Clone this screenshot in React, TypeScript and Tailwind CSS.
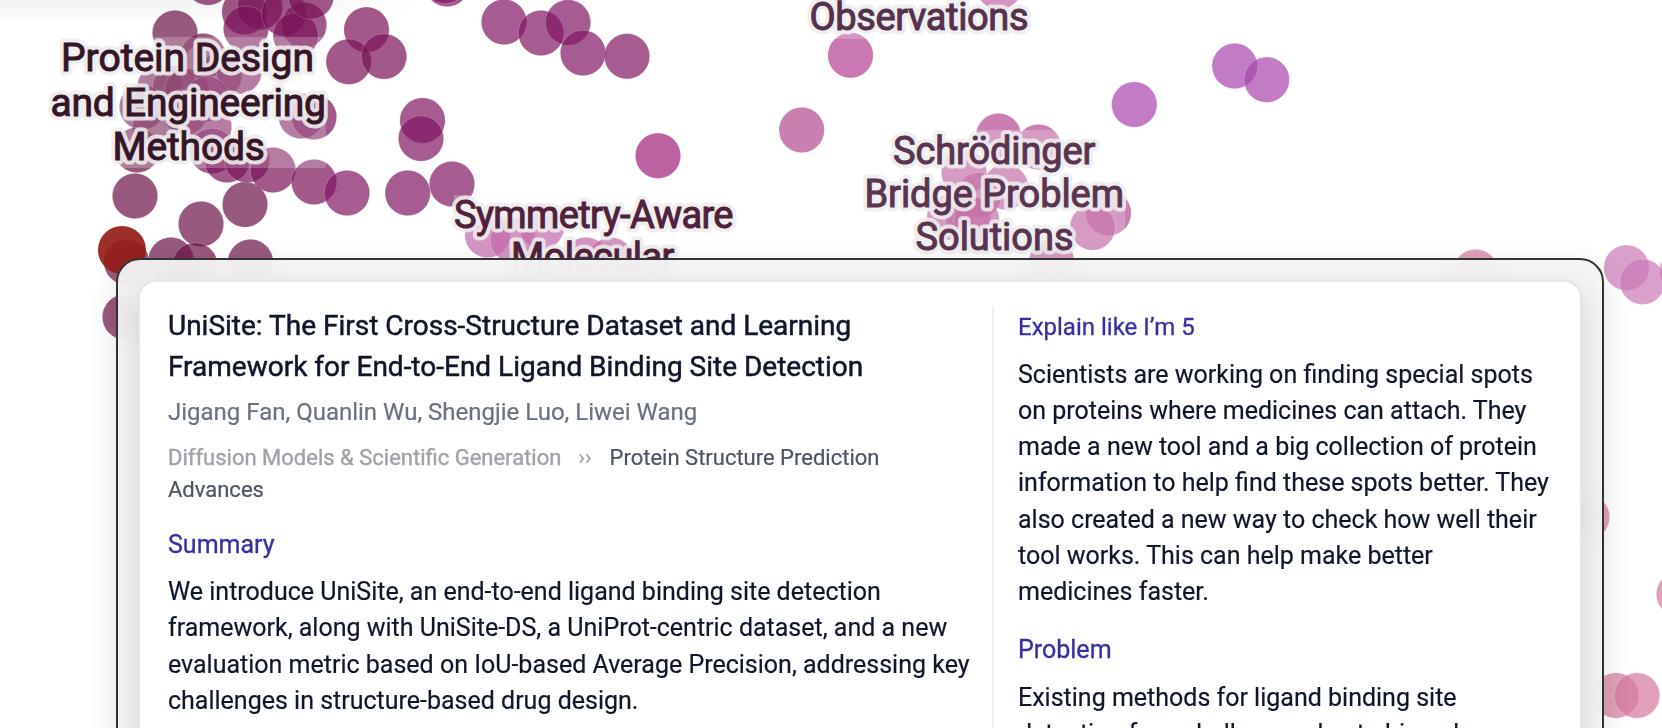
import React from 'react';

interface DotGroup {
  color: string;
  points: [number, number][];
}

interface LabelLine {
  text: string;
  x: number;
  y: number;
  width: number;
}

interface MapLabel {
  color: string;
  size: number;
  box: [number, number, number, number];
  lines: LabelLine[];
}

const DOT_RADIUS = 22.7;

const dotGroups: DotGroup[] = [
  {
    color: '#6c1347',
    points: [
      [175, 33], [203, 56], [219, 76], [135, 196], [245, 204.5], [201, 224],
      [171, 260], [195, 265.5], [250.5, 262], [126.5, 262], [125, 317],
      [160, 87], [175, 88], [187, 91], [142, 107], [155, 128], [185, 112], [137, 150],
    ],
  },
  {
    color: '#7a1359',
    points: [
      [208, -17.5], [244.5, 12], [260, 7], [246, 28.7], [284, 13.5], [304, 25],
      [295.7, 35.4], [311, -3.5], [366.5, 29.7], [348.7, 61.7], [384, 56.5],
      [239, 71.5], [207, 99], [209, 127], [212, 151], [227, 160], [247, 160],
      [273, 170], [314, 182], [301, 116], [314, 117],
    ],
  },
  {
    color: '#801662',
    points: [
      [347, 193], [407.7, 193], [452, 184], [422.5, 120.5], [421, 138.5],
      [504, 22], [541, 33], [568, 22.5], [583, 53], [627, 56.3], [447, -16], [445, -19],
    ],
  },
  { color: '#a11f77', points: [[658, 155.7]] },
  {
    color: '#b23e91',
    points: [[850.5, 55.3], [999, -13], [487.5, 235], [513, 240], [541.7, 226.5], [586, 260], [610.7, 260]],
  },
  {
    color: '#b44890',
    points: [
      [801.7, 130], [998.5, 136], [1038.5, 147], [964, 172.5], [1005.5, 187],
      [979, 195], [949.5, 217.5], [968, 218], [976.7, 220], [1108.5, 213],
      [1092.5, 227.5], [1051.7, 262],
    ],
  },
  { color: '#a644ac', points: [[1134.3, 104.5], [1234.7, 66], [1266.7, 79.7]] },
  { color: '#c977b5', points: [[1626.5, 267.7], [1642.5, 281.7], [1682, 272]] },
  { color: '#d3779c', points: [[1475.7, 272], [1587, 517], [1679, 594], [1616, 695.5], [1637, 695.5]] },
];

const mapLabels: MapLabel[] = [
  {
    color: '#361527',
    size: 39,
    box: [49, 37, 277, 131],
    lines: [
      { text: 'Protein Design', x: 61, y: 71.3, width: 253 },
      { text: 'and Engineering', x: 50.5, y: 115.5, width: 275.5 },
      { text: 'Methods', x: 112.5, y: 159.5, width: 152.5 },
    ],
  },
  {
    color: '#56304c',
    size: 38,
    box: [808, -40, 222, 79],
    lines: [{ text: 'Observations', x: 809.5, y: 30.3, width: 219 }],
  },
  {
    color: '#5a3450',
    size: 38,
    box: [864, 130, 261, 131],
    lines: [
      { text: 'Schrödinger', x: 893, y: 164, width: 202.5 },
      { text: 'Bridge Problem', x: 864.5, y: 207, width: 259.5 },
      { text: 'Solutions', x: 915.5, y: 250.3, width: 158 },
    ],
  },
  {
    color: '#4f213b',
    size: 38,
    box: [454, 195, 280, 90],
    lines: [
      { text: 'Symmetry-Aware', x: 454, y: 228, width: 279.5 },
      { text: 'Molecular', x: 511, y: 270, width: 163.5 },
    ],
  },
];

const PaperMap: React.FC = () => (
  <svg className="absolute inset-0" width="1662" height="728" viewBox="0 0 1662 728">
    {dotGroups.map((group) =>
      group.points.map(([x, y]) => (
        <circle
          key={`${x}-${y}`}
          cx={x}
          cy={y}
          r={DOT_RADIUS}
          fill={group.color}
          fillOpacity={0.7}
          stroke="#ffffff"
          strokeOpacity={0.2}
          strokeWidth={1}
        />
      ))
    )}
    {/* Currently selected paper */}
    <circle cx={122} cy={250} r={24} fill="#951d18" fillOpacity={0.92} />

    {mapLabels.map((label) => (
      <g key={label.lines[0].text} fontFamily="Roboto, sans-serif" fontSize={label.size}>
        <rect
          x={label.box[0]}
          y={label.box[1]}
          width={label.box[2]}
          height={label.box[3]}
          fill="#ffffff"
          fillOpacity={0.22}
        />
        {label.lines.map((line) => (
          <text
            key={line.text}
            x={line.x}
            y={line.y}
            textLength={line.width}
            fill="none"
            stroke="#eeedee"
            strokeOpacity={0.88}
            strokeWidth={9}
            strokeLinejoin="round"
          >
            {line.text}
          </text>
        ))}
        {label.lines.map((line) => (
          <text
            key={line.text}
            x={line.x}
            y={line.y}
            textLength={line.width}
            fill={label.color}
            stroke={label.color}
            strokeWidth={1}
          >
            {line.text}
          </text>
        ))}
      </g>
    ))}
  </svg>
);

const SectionTitle: React.FC<{ className?: string; children: React.ReactNode }> = ({
  className = 'text-[25px]',
  children,
}) => (
  <h3 className={`${className} leading-9 text-[#3730a3] [-webkit-text-stroke:0.3px_#3730a3]`}>{children}</h3>
);

const SectionBody: React.FC<{ lines: string[] }> = ({ lines }) => (
  <p className="mt-3 text-[25px] leading-[36.3px] whitespace-nowrap text-[#0f172a] [-webkit-text-stroke:0.2px_#0f172a]">
    {lines.map((line) => (
      <span key={line} className="block">{line}</span>
    ))}
  </p>
);

const App: React.FC = () => {
  return (
    <div className="relative h-[728px] w-[1662px] overflow-hidden bg-white font-[Roboto,sans-serif]">
      <PaperMap />
      <div className="absolute top-0 left-0 h-6 w-[420px] bg-linear-to-b from-black/5 to-transparent mask-r-from-60% mask-r-to-100%" />

      {/* Paper details popup */}
      <div className="absolute top-[258px] left-[116px] h-[900px] w-[1488px] rounded-[24px] border-2 border-[#333333] bg-[#f3f3f3]/94 p-5 shadow-[0_8px_28px_rgba(0,0,0,0.12)] backdrop-blur-lg">
        <div className="flex h-full rounded-[18px] border-2 border-[#e5e5ec] bg-white px-7 pt-6 shadow-[0_10px_28px_rgba(0,0,0,0.14)]">
          <div className="w-[826px] border-r-2 border-[#ededf3]">
            <h2 className="-mt-px text-[28px] leading-[41px] whitespace-nowrap text-[#0f172a] [-webkit-text-stroke:0.5px_#0f172a]">
              UniSite: The First Cross-Structure Dataset and Learning
              <br />
              Framework for End-to-End Ligand Binding Site Detection
            </h2>
            <p className="mt-[7px] text-[24px] leading-9 text-[#6b7280] [-webkit-text-stroke:0.2px_#6b7280]">
              Jigang Fan, Quanlin Wu, Shengjie Luo, Liwei Wang
            </p>
            <p className="mt-3 text-[22px] leading-8 whitespace-nowrap text-[#4b5563] [-webkit-text-stroke:0.2px_#4b5563]">
              <span className="text-[#a1a1aa] [-webkit-text-stroke:0.4px_#a1a1aa]">
                Diffusion Models &amp; Scientific Generation
              </span>
              <span className="mr-[18px] ml-[17px] text-[#9ca3af] [-webkit-text-stroke:0.2px_#9ca3af]">››</span>
              Protein Structure Prediction
              <br />
              Advances
            </p>
            <div className="mt-[21px]">
              <SectionTitle>Summary</SectionTitle>
              <div className="-mt-px">
                <SectionBody
                  lines={[
                    'We introduce UniSite, an end-to-end ligand binding site detection',
                    'framework, along with UniSite-DS, a UniProt-centric dataset, and a new',
                    'evaluation metric based on IoU-based Average Precision, addressing key',
                    'challenges in structure-based drug design.',
                  ]}
                />
              </div>
            </div>
          </div>

          <div className="flex flex-col gap-[21px] pt-[2.5px] pl-6">
            <div>
              <SectionTitle className="text-[24px]">Explain like I’m 5</SectionTitle>
              <SectionBody
                lines={[
                  'Scientists are working on finding special spots',
                  'on proteins where medicines can attach. They',
                  'made a new tool and a big collection of protein',
                  'information to help find these spots better. They',
                  'also created a new way to check how well their',
                  'tool works. This can help make better',
                  'medicines faster.',
                ]}
              />
            </div>
            <div>
              <SectionTitle>Problem</SectionTitle>
              <SectionBody
                lines={['Existing methods for ligand binding site', 'detection face challenges due to biased']}
              />
            </div>
          </div>
        </div>
      </div>
    </div>
  );
};

export default App;
